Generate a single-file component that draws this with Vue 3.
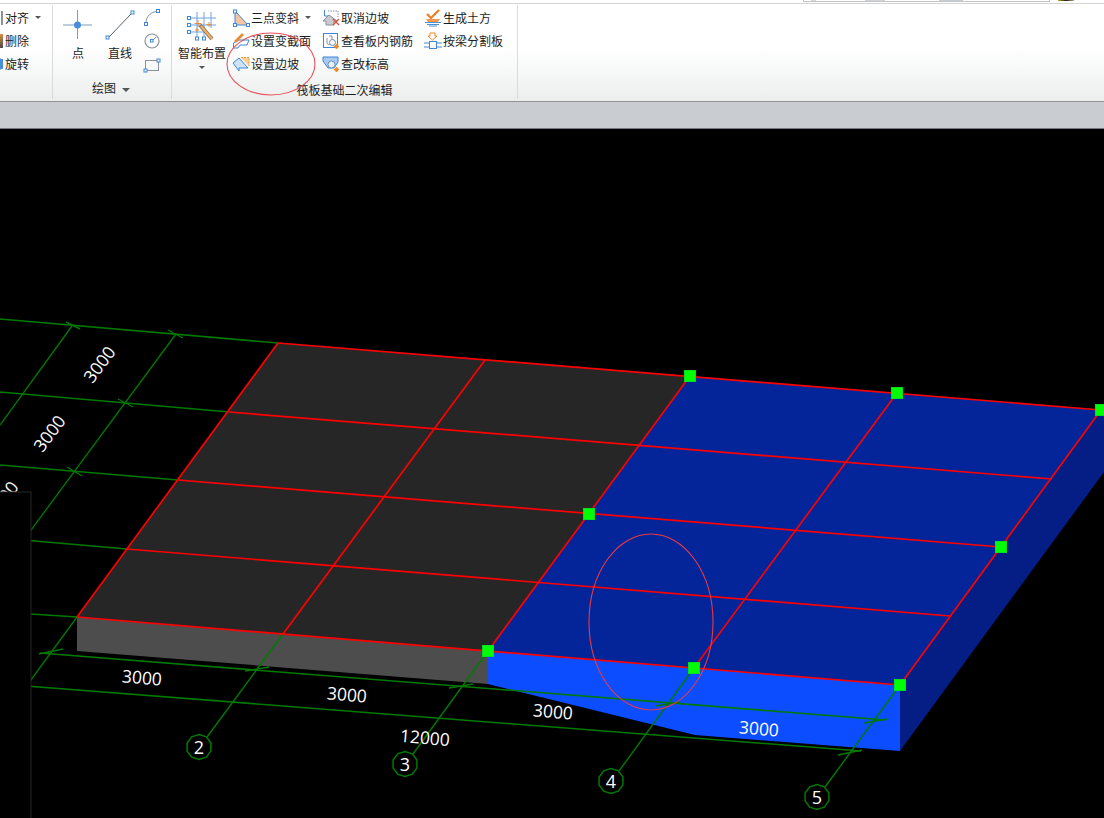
<script setup>
const labels = [
  { t: '3000', x: 99, y: 364, r: -53 },
  { t: '3000', x: 49, y: 433, r: -53 },
  { t: '3000', x: 2, y: 499, r: -53 },
  { t: '3000', x: 142, y: 677, r: 5 },
  { t: '3000', x: 347, y: 694, r: 5 },
  { t: '3000', x: 553, y: 711, r: 5 },
  { t: '3000', x: 759, y: 728, r: 5 },
  { t: '12000', x: 425, y: 737, r: 5 },
]
const markers = [[690, 376], [897, 393], [1101, 410], [589, 514], [1001, 547], [488, 651], [694, 668], [900, 685]]
const decagon = (cx, cy, r) =>
  Array.from({ length: 10 }, (_, i) => {
    const a = (Math.PI / 5) * i + Math.PI / 10
    return `${(cx + r * Math.cos(a)).toFixed(1)},${(cy + r * Math.sin(a)).toFixed(1)}`
  }).join(' ')
const bubbles = [
  { n: '2', x: 199, y: 747 },
  { n: '3', x: 405, y: 764 },
  { n: '4', x: 611, y: 781 },
  { n: '5', x: 817, y: 797 },
].map((b) => ({ ...b, pts: decagon(b.x, b.y, 12.5) }))
const gridLines = [
  [0, 319, 278, 343], [0, 392, 229, 412], [0, 465, 178, 480], [0, 538, 127, 549], [0, 612, 77, 617],
]
const diagonals = [[72, 326, 0, 425], [176, 334, 0, 572], [77, 617, 0, 722]]
const ticks = [
  [66, 322, 80, 329], [168, 330, 183, 338], [118, 399, 133, 407], [67, 467, 82, 476],
  [39, 654, 63, 649], [245, 671, 269, 667], [449, 688, 473, 684], [656, 706, 680, 702], [864, 723, 887, 719], [838, 755, 862, 750],
]
const axes = [
  [283, 634, 207, 737], [488, 651, 413, 754], [694, 668, 619, 771], [900, 685, 825, 787],
]
const redLines = [
  [278, 343, 1101, 410], [229, 412, 1052, 479], [178, 480, 1001, 547], [127, 549, 950, 616], [77, 617, 900, 685],
  [278, 343, 77, 617], [485, 360, 283, 634], [690, 376, 488, 651], [897, 393, 694, 668], [1101, 410, 900, 685],
]
</script>

<template>
  <div class="page">
    <div class="topstrip">
      <div class="search"></div>
      <div class="avatar"></div>
    </div>

    <div class="ribbon">
      <section class="group g-edit">
        <div class="rows">
          <div class="row"><i class="stub s-gray"></i><span>对齐</span><b class="caret"></b></div>
          <div class="row"><i class="stub s-orange"></i><span>删除</span></div>
          <div class="row"><i class="stub s-blue"></i><span>旋转</span></div>
        </div>
      </section>

      <section class="group g-draw">
        <div class="tools">
          <div class="big big-point">
            <svg width="32" height="32" viewBox="0 0 32 32">
              <path d="M1 16H30M15.500 1V30" stroke="#7f9bb5" fill="none" />
              <circle cx="15.500" cy="16" r="3.500" fill="#4a8edb" />
            </svg>
            <span>点</span>
          </div>
          <div class="big big-line">
            <svg width="32" height="32" viewBox="0 0 32 32">
              <path d="M4 29L28 4" stroke="#555f69" fill="none" />
              <rect x="2" y="27" width="3" height="3" fill="#fff" stroke="#3f86d8" />
              <rect x="27" y="2" width="3" height="3" fill="#fff" stroke="#3f86d8" />
            </svg>
            <span>直线</span>
          </div>
          <div class="mini">
            <svg width="18" height="18" viewBox="0 0 18 18">
              <path d="M3 15C3 8 8 4 15 3" stroke="#8a9198" fill="none" />
              <rect x="1.500" y="14.500" width="3" height="3" fill="#fff" stroke="#3f86d8" />
              <rect x="13.500" y="1.500" width="3" height="3" fill="#fff" stroke="#3f86d8" />
            </svg>
            <svg width="18" height="18" viewBox="0 0 18 18">
              <circle cx="9" cy="9" r="7" stroke="#8a9198" fill="#fff" stroke-width="1.200" />
              <path d="M9 9L13 5" stroke="#8a9198" fill="none" />
              <rect x="7.500" y="7.500" width="2.500" height="2.500" fill="#fff" stroke="#3f86d8" />
            </svg>
            <svg width="18" height="18" viewBox="0 0 18 18">
              <rect x="2.500" y="4.500" width="13" height="10" fill="none" stroke="#8a9198" />
              <rect x="1" y="13" width="3" height="3" fill="#fff" stroke="#3f86d8" />
              <rect x="14" y="3" width="3" height="3" fill="#fff" stroke="#3f86d8" />
            </svg>
          </div>
        </div>
        <div class="glabel glabel-draw">绘图<b class="caret caret-wide"></b></div>
      </section>

      <section class="group g-raft">
        <div class="tools">
          <div class="big big-smart">
            <svg width="32" height="32" viewBox="0 0 32 32">
              <path d="M11 1V27M18 1V27M25 1V17M3 7H30M3 14H30M3 21H18" stroke="#6ea4e0" fill="none" />
              <rect x="1.500" y="5.500" width="3" height="3" fill="#fff" stroke="#3f86d8" />
              <rect x="1.500" y="12.500" width="3" height="3" fill="#fff" stroke="#3f86d8" />
              <rect x="1.500" y="19.500" width="3" height="3" fill="#fff" stroke="#3f86d8" />
              <rect x="9.500" y="26" width="3" height="3" fill="#fff" stroke="#3f86d8" />
              <rect x="16.500" y="26" width="3" height="3" fill="#fff" stroke="#3f86d8" />
              <path d="M14 14L26 28" stroke="#8a7a6a" stroke-width="4" />
              <path d="M15 15L26 28" stroke="#f0b060" stroke-width="2" />
              <path d="M12 9V16M8.500 12.500H15.500M23 11V16M20.500 13.500H25.500M9 19H13M11 17V21" stroke="#ef8a3a" fill="none" />
            </svg>
            <span>智能布置</span>
            <b class="caret caret-below"></b>
          </div>

          <div class="rows col-a">
            <div class="row">
              <svg class="ico" width="18" height="18" viewBox="0 0 18 18">
                <path d="M3 2V16H16Z" fill="#f7c3a0" stroke="#3f86d8" />
                <rect x="1.500" y="1" width="3" height="3" fill="#fff" stroke="#3f86d8" />
                <rect x="1.500" y="14.500" width="3" height="3" fill="#fff" stroke="#3f86d8" />
                <rect x="14.500" y="14.500" width="3" height="3" fill="#fff" stroke="#3f86d8" />
              </svg>
              <span>三点变斜</span><b class="caret"></b>
            </div>
            <div class="row">
              <svg class="ico" width="18" height="18" viewBox="0 0 18 18">
                <path d="M1.500 11L7 8H17L15 13H8L6 16H1.500Z" fill="#fff" stroke="#3f86d8" />
                <path d="M3 10L11 2" stroke="#ef8a2a" stroke-width="2.500" />
              </svg>
              <span>设置变截面</span>
            </div>
            <div class="row">
              <svg class="ico" width="18" height="18" viewBox="0 0 18 18">
                <path d="M1 8L7 3L16 13H7V16Z" fill="#cfe2f6" stroke="#3f86d8" />
                <path d="M9 3H17V11Z" fill="#f9cf9a" />
                <path d="M9 2.500H17V11" fill="none" stroke="#f09030" stroke-dasharray="2 1" />
              </svg>
              <span>设置边坡</span>
            </div>
          </div>

          <div class="rows col-b">
            <div class="row">
              <svg class="ico" width="18" height="18" viewBox="0 0 18 18">
                <path d="M2.500 1V7H6" fill="none" stroke="#3f86d8" />
                <path d="M6 2H16V8" fill="none" stroke="#8a9198" stroke-dasharray="1.500 1" />
                <path d="M1 12L7 6L15 12H12V16H4V12Z" fill="#c8ccd0" stroke="#8a9198" />
                <path d="M11 10L17 16M17 10L11 16" stroke="#e0503a" stroke-width="1.400" />
              </svg>
              <span>取消边坡</span>
            </div>
            <div class="row">
              <svg class="ico" width="18" height="18" viewBox="0 0 18 18">
                <rect x="1.500" y="1.500" width="14" height="14" fill="#fff" stroke="#3f86d8" />
                <path d="M5 6V11C5 13 10 13 10 11V4H7" fill="none" stroke="#8a9198" />
                <circle cx="10.500" cy="10.500" r="3" fill="#fff" stroke="#6a8fb5" />
                <rect x="12.500" y="12.500" width="4" height="4" fill="#ef8a2a" transform="rotate(45 14.500 14.500)" />
              </svg>
              <span>查看板内钢筋</span>
            </div>
            <div class="row">
              <svg class="ico" width="18" height="18" viewBox="0 0 18 18">
                <path d="M1 2H16V7L12 13H6L1 6Z" fill="#a9cbef" stroke="#3f86d8" />
                <circle cx="9.500" cy="9.500" r="3.500" fill="#e8f0f8" stroke="#6a8fb5" />
                <rect x="12.500" y="12.500" width="4" height="4" fill="#ef8a2a" transform="rotate(45 14.500 14.500)" />
              </svg>
              <span>查改标高</span>
            </div>
          </div>

          <div class="rows col-c">
            <div class="row">
              <svg class="ico" width="18" height="18" viewBox="0 0 18 18">
                <path d="M3 5L7 9L15 1" fill="none" stroke="#ef7d22" stroke-width="2.200" />
                <path d="M2 10H16L14 13H4Z" fill="#ef9a50" />
                <path d="M1 13.500H17M3 15.500H15M5 17H13" stroke="#4f8fd8" />
              </svg>
              <span>生成土方</span>
            </div>
            <div class="row">
              <svg class="ico" width="18" height="18" viewBox="0 0 18 18">
                <path d="M6 1H11V4H13L8.500 8L4 4H6Z" fill="#fff" stroke="#ef8a2a" />
                <rect x="5.500" y="9.500" width="7" height="7" fill="#fff" stroke="#3f86d8" />
                <path d="M0 11H5M13 11H18M0 15H5M13 15H18" stroke="#3f86d8" />
              </svg>
              <span>按梁分割板</span>
            </div>
          </div>
        </div>
        <div class="glabel glabel-raft">筏板基础二次编辑</div>
      </section>
    </div>

    <div class="toolbar"></div>

    <svg class="canvas" width="1104" height="689" viewBox="0 129 1104 689">
      <g stroke="#007a00" fill="none">
        <line v-for="(l, i) in gridLines" :key="'g' + i" :x1="l[0]" :y1="l[1]" :x2="l[2]" :y2="l[3]" stroke-width="1.600" />
        <line v-for="(l, i) in diagonals" :key="'d' + i" :x1="l[0]" :y1="l[1]" :x2="l[2]" :y2="l[3]" stroke-width="1.300" />
      </g>

      <polygon points="77,617 488,651 488,684 77,651" fill="#4d4d4d" />
      <polygon points="488,651 900,685 900,751 695,735 488,684" fill="#0c4dff" />
      <polygon points="900,685 1101,410 1104,405 1104,472 900,751" fill="#041e85" />
      <polygon points="278,343 690,376 488,651 77,617" fill="#262626" />
      <polygon points="690,376 1101,410 900,685 488,651" fill="#04259a" />

      <g stroke="#007a00" fill="none" stroke-width="1.400">
        <line x1="40" y1="653" x2="886" y2="720" stroke-width="1.600" />
        <line x1="0" y1="684" x2="861" y2="751" stroke-width="1.600" />
        <line v-for="(l, i) in ticks" :key="'t' + i" :x1="l[0]" :y1="l[1]" :x2="l[2]" :y2="l[3]" />
        <line v-for="(l, i) in axes" :key="'a' + i" :x1="l[0]" :y1="l[1]" :x2="l[2]" :y2="l[3]" />
      </g>

      <g stroke="#ff0000" stroke-width="1.700">
        <line v-for="(l, i) in redLines" :key="'r' + i" :x1="l[0]" :y1="l[1]" :x2="l[2]" :y2="l[3]" />
      </g>

      <rect
        v-for="(m, i) in markers"
        :key="'m' + i"
        :x="m[0] - 5.500"
        :y="m[1] - 5.500"
        width="11"
        height="11"
        fill="#00ff00"
        stroke="#00e020"
      />

      <polygon
        v-for="b in bubbles"
        :key="'p' + b.n"
        :points="b.pts"
        fill="none"
        stroke="#007a00"
        stroke-width="1.500"
      />
      <text v-for="b in bubbles" :key="'n' + b.n" class="num" :x="b.x" :y="b.y">{{ b.n }}</text>

      <text
        v-for="(l, i) in labels"
        :key="'l' + i"
        class="dim"
        :x="l.x"
        :y="l.y"
        :transform="`rotate(${l.r} ${l.x} ${l.y})`"
      >{{ l.t }}</text>

      <rect x="-2" y="492" width="33" height="340" fill="#000" stroke="#262626" />

      <ellipse cx="651" cy="622" rx="62" ry="88" fill="none" stroke="#e83a44" stroke-width="1.100" />
    </svg>

    <svg class="mark" width="100" height="70" viewBox="0 0 100 70">
      <ellipse cx="50" cy="35" rx="44" ry="31" fill="none" stroke="#e8505a" stroke-width="1.100" />
    </svg>
  </div>
</template>

<style scoped>
.page {
  position: relative;
  width: 1104px;
  height: 818px;
  overflow: hidden;
  display: flex;
  flex-direction: column;
  background: #000;
  font-family: "Noto Sans CJK SC", "Liberation Sans", sans-serif;
  font-size: 12px;
  color: #1c1c1c;
}
.topstrip {
  flex: none;
  height: 3px;
  background: #fff;
  border-bottom: 1px solid #d4d4d4;
  display: flex;
  align-items: flex-start;
  padding-left: 803px;
}
.search {
  width: 245px;
  height: 1px;
  border: 1px solid #c4c4c4;
  border-top: 0;
  background: linear-gradient(90deg, #fff 0 3%, #d8d8d0 3% 5%, #fff 5% 25%, #cfd4d8 25% 33%, #fff 33% 55%, #c8ccd4 55% 65%, #fff 65%);
}
.avatar {
  width: 16px;
  height: 1px;
  margin-left: 8px;
  background: linear-gradient(90deg, #b8b020, #201c10 50%, #c8a888);
}
.ribbon {
  flex: none;
  height: 97px;
  display: flex;
  background: linear-gradient(#fff 0%, #fff 45%, #eceeee 100%);
  border-bottom: 1px solid #929292;
}
.group {
  position: relative;
  flex: none;
  height: 94px;
  border-right: 1px solid #d9dbdb;
  margin-top: 1px;
  box-sizing: border-box;
  padding-top: 1px;
}
.g-edit { width: 53px; padding-left: 0; }
.g-draw { width: 119px; }
.g-raft { width: 346px; }
.rows { display: flex; flex-direction: column; }
.row {
  height: 23px;
  display: flex;
  align-items: center;
  white-space: nowrap;
  line-height: 23px;
}
.row span { display: block; }
.stub { flex: none; width: 3px; height: 14px; margin-right: 2px; }
.s-gray { background: linear-gradient(90deg, #fff 0 50%, #8a9198 50%); }
.s-orange { background: linear-gradient(#d89040, #4a4a4a); }
.s-blue { background: radial-gradient(circle at 0 50%, #4a8edb 70%, transparent 75%); }
.caret {
  display: inline-block;
  width: 0;
  height: 0;
  margin-left: 6px;
  border-style: solid;
  border-width: 3px 3px 0;
  border-color: #555 transparent transparent;
}
.caret-wide {
  border-width: 4px 4px 0;
  vertical-align: middle;
}
.tools { display: flex; align-items: flex-start; }
.big {
  flex: none;
  display: flex;
  flex-direction: column;
  align-items: center;
  line-height: 17px;
}
.big svg { display: block; margin-top: 3px; margin-bottom: 3px; }
.big-point { width: 32px; margin-left: 9px; }
.big-line { width: 32px; margin-left: 10px; }
.mini {
  display: flex;
  flex-direction: column;
  margin-left: 7px;
  margin-top: 2px;
  gap: 6px;
}
.mini svg { display: block; }
.glabel {
  position: absolute;
  left: 0;
  right: 0;
  line-height: 17px;
  text-align: center;
}
.glabel-draw { top: 74px; padding-right: 2px; }
.glabel-raft { top: 76px; }
.big-smart { width: 48px; margin-left: 6px; }
.big-smart svg { margin-top: 5px; margin-bottom: 1px; }
.caret-below { margin: 5px 0 0; }
.ico { flex: none; display: block; margin-right: 1px; }
.col-a { margin-left: 6px; width: 90px; }
.col-b { width: 102px; }
.col-c { width: auto; }
.toolbar {
  flex: none;
  height: 26px;
  background: #c9ccd0;
  border-bottom: 1px solid #75787c;
}
.canvas { flex: none; display: block; }
.dim {
  font-family: "Open Sans", "Liberation Sans", sans-serif;
  font-size: 17.500px;
  fill: #fff;
  text-anchor: middle;
  dominant-baseline: central;
}
.num {
  font-family: "Open Sans", "Liberation Sans", sans-serif;
  font-size: 18px;
  fill: #fff;
  text-anchor: middle;
  dominant-baseline: central;
}
.mark {
  position: absolute;
  left: 221px;
  top: 29px;
  overflow: visible;
  pointer-events: none;
}
</style>
